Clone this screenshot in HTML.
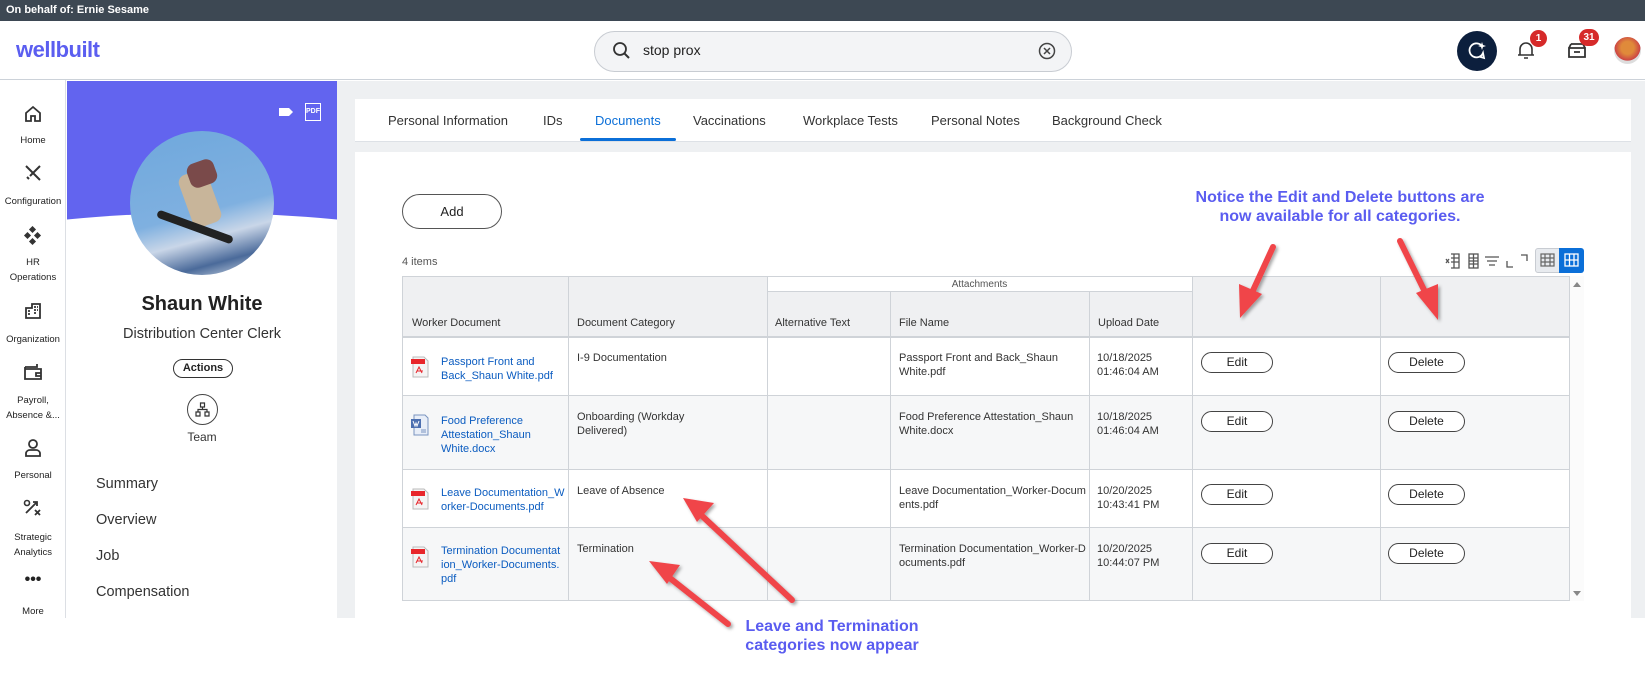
<!DOCTYPE html>
<html style="overflow:hidden;height:684px"><head><meta charset="utf-8">
<style>
*{box-sizing:border-box;margin:0;padding:0}
body{width:1645px;height:684px;overflow:hidden;background:#fff;font-family:"Liberation Sans",Arial,sans-serif;color:#333;position:relative}
.a{position:absolute}
.topbar{left:0;top:0;width:1645px;height:21px;background:#3d4853;color:#fff;font-size:11px;font-weight:bold;padding:4px 6px}
.hdr{left:0;top:21px;width:1645px;height:59px;background:#fff;border-bottom:1px solid #ccd2d9}
.nav{left:0;top:80px;width:66px;height:538px;background:#fff;border-right:1px solid #dcdfe4}
.nl{width:66px;text-align:center;font-size:9.5px;color:#222;line-height:15px;position:absolute;left:0}
.tab{font-size:13px;color:#333;top:113px}
.cell{position:absolute;font-size:11px;line-height:14px;color:#333}
.lnk{color:#0b5cc0}
.btn{position:absolute;border:1px solid #444;border-radius:12px;font-size:12px;text-align:center;line-height:19px;color:#222;background:#fff}
.ann{position:absolute;color:#5a5cf0;font-weight:bold;font-size:16px;text-align:center;line-height:19px}
</style></head><body>
<div class="a topbar">On behalf of: Ernie Sesame</div>
<div class="a hdr"></div>
<div class="a" style="left:16px;top:37px;font-size:22px;font-weight:bold;color:#5b5ef0;letter-spacing:-0.5px">wellbuilt</div>
<div class="a" style="left:594px;top:31px;width:478px;height:41px;border:1px solid #c8ccd2;border-radius:21px;background:#f3f4f6"></div>
<svg class="a" style="left:612px;top:41px" width="20" height="20" viewBox="0 0 20 20"><circle cx="8" cy="8" r="6" fill="none" stroke="#333" stroke-width="1.8"/><path d="M12.5 12.5L17 17" stroke="#333" stroke-width="2"/></svg>
<div class="a" style="left:643px;top:42px;font-size:14px;color:#222">stop prox</div>
<svg class="a" style="left:1038px;top:42px" width="18" height="18" viewBox="0 0 18 18"><circle cx="9" cy="9" r="7.5" fill="none" stroke="#444" stroke-width="1.5"/><path d="M6 6L12 12M12 6L6 12" stroke="#444" stroke-width="1.5"/></svg>
<div class="a" style="left:1457px;top:31px;width:40px;height:40px;border-radius:50%;background:#0c1f3d"></div>
<svg class="a" style="left:1466px;top:40px" width="22" height="22" viewBox="0 0 22 22"><path d="M15 5A7 7 0 1 0 17 13L18 18L13 16.5" fill="none" stroke="#fff" stroke-width="1.8"/><path d="M16 2L17 5L20 6L17 7L16 10L15 7L12 6L15 5Z" fill="#fff"/></svg>
<svg class="a" style="left:1517px;top:40px" width="18" height="20" viewBox="0 0 18 20"><path d="M3 15V9A6 6 0 0 1 15 9V15H3ZM1 15H17M7 18H11" fill="none" stroke="#333" stroke-width="1.6"/></svg>
<div class="a" style="left:1530px;top:30px;width:17px;height:17px;border-radius:50%;background:#d62a2a;color:#fff;font-size:10px;font-weight:bold;text-align:center;line-height:17px">1</div>
<svg class="a" style="left:1567px;top:41px" width="20" height="18" viewBox="0 0 20 18"><path d="M2 7H18V16H2ZM4 3H16L18 7M2 7L4 3M7 11H13" fill="none" stroke="#333" stroke-width="1.8"/></svg>
<div class="a" style="left:1579px;top:29px;width:20px;height:17px;border-radius:9px;background:#d62a2a;color:#fff;font-size:10px;font-weight:bold;text-align:center;line-height:17px">31</div>
<div class="a" style="left:1614px;top:37px;width:27px;height:27px;border-radius:50%;background:radial-gradient(circle at 50% 40%,#e08a3a 30%,#c44 60%,#ddd 62%)"></div>

<div class="a nav"></div>
<svg class="a" style="left:23px;top:104px" width="20" height="20" viewBox="0 0 20 20"><path d="M3 9L10 3L17 9V17H12V12H8V17H3Z" fill="none" stroke="#333" stroke-width="1.8"/></svg>
<div class="nl" style="top:133px">Home</div>
<svg class="a" style="left:24px;top:164px" width="18" height="18" viewBox="0 0 18 18"><path d="M2 2L16 16M16 2L6 12M3 13L5 15" stroke="#333" stroke-width="2"/></svg>
<div class="nl" style="top:194px">Configuration</div>
<svg class="a" style="left:23px;top:226px" width="20" height="20" viewBox="0 0 20 20"><g fill="#333"><rect x="7" y="1" width="5" height="5" transform="rotate(45 9.5 3.5)"/><rect x="2" y="7" width="5" height="5" transform="rotate(45 4.5 9.5)"/><rect x="12" y="7" width="5" height="5" transform="rotate(45 14.5 9.5)"/><rect x="7" y="13" width="5" height="5" transform="rotate(45 9.5 15.5)"/></g></svg>
<div class="nl" style="top:255px">HR<br>Operations</div>
<svg class="a" style="left:24px;top:302px" width="18" height="18" viewBox="0 0 18 18"><path d="M2 16V6H8V2H16V16ZM4 9H6M4 12H6M10 5H12M10 8H12M10 11H12M13 5H14M13 8H14" fill="none" stroke="#333" stroke-width="1.8"/></svg>
<div class="nl" style="top:332px">Organization</div>
<svg class="a" style="left:23px;top:363px" width="20" height="18" viewBox="0 0 20 18"><path d="M2 4H14V1M2 4V16H18V6H2M13 10H18V13H13Z" fill="none" stroke="#333" stroke-width="1.8"/></svg>
<div class="nl" style="top:393px">Payroll,<br>Absence &amp;...</div>
<svg class="a" style="left:24px;top:438px" width="18" height="20" viewBox="0 0 18 20"><circle cx="9" cy="6" r="4" fill="none" stroke="#333" stroke-width="1.8"/><path d="M2 18V15A4 4 0 0 1 6 12H12A4 4 0 0 1 16 15V18Z" fill="none" stroke="#333" stroke-width="1.8"/></svg>
<div class="nl" style="top:468px">Personal</div>
<svg class="a" style="left:23px;top:499px" width="20" height="18" viewBox="0 0 20 18"><circle cx="4" cy="4" r="2.5" fill="none" stroke="#333" stroke-width="1.6"/><path d="M3 14L14 3M10 3H14V7M12 11L17 16M17 11L12 16" fill="none" stroke="#333" stroke-width="1.8"/></svg>
<div class="nl" style="top:530px">Strategic<br>Analytics</div>
<div class="nl" style="top:572px;font-size:16px;font-weight:bold">•••</div>
<div class="nl" style="top:604px">More</div>

<div class="a" style="left:67px;top:81px;width:270px;height:537px;background:#fff;overflow:hidden">
 <div class="a" style="left:0;top:0;width:270px;height:160px;background:#6264ef"></div>
 <div class="a" style="left:-400px;top:132px;width:1070px;height:400px;border-radius:50%;background:#fff"></div>
</div>
<svg class="a" style="left:278px;top:106px" width="16" height="12" viewBox="0 0 16 12"><path d="M1 2H11L15 6L11 10H1Z" fill="#fff"/></svg>
<div class="a" style="left:305px;top:103px;width:16px;height:18px;border:1.5px solid #fff;color:#fff;font-size:7px;font-weight:bold;text-align:center;line-height:15px">PDF</div>
<div class="a" style="left:130px;top:131px;width:144px;height:144px;border-radius:50%;background:linear-gradient(165deg,#6fa8dc 0%,#7fb0e0 55%,#c9d6e8 70%,#4a6a9a 85%,#e6ecf4 100%);overflow:hidden">
 <div class="a" style="left:55px;top:40px;width:30px;height:55px;background:#c8b59a;transform:rotate(-20deg);border-radius:8px"></div>
 <div class="a" style="left:58px;top:30px;width:28px;height:25px;background:#7a4a4a;transform:rotate(-20deg);border-radius:8px"></div>
 <div class="a" style="left:25px;top:92px;width:80px;height:8px;background:#222;transform:rotate(20deg);border-radius:4px"></div>
</div>
<div class="a" style="left:67px;top:293px;width:270px;text-align:center;font-size:20px;font-weight:bold;color:#222">Shaun White</div>
<div class="a" style="left:67px;top:326px;width:270px;text-align:center;font-size:14.5px;color:#333">Distribution Center Clerk</div>
<div class="a" style="left:173px;top:359px;width:60px;height:19px;border:1px solid #333;border-radius:10px;font-size:11px;font-weight:bold;text-align:center;line-height:17px;color:#222">Actions</div>
<div class="a" style="left:187px;top:394px;width:31px;height:31px;border:1.2px solid #444;border-radius:50%"></div>
<svg class="a" style="left:195px;top:402px" width="15" height="15" viewBox="0 0 15 15"><path d="M5.5 1H9.5V5H5.5ZM1 10H5V14H1ZM10 10H14V14H10ZM7.5 5V7.5M3 10V7.5H12V10" fill="none" stroke="#333" stroke-width="1.2"/></svg>
<div class="a" style="left:67px;top:430px;width:270px;text-align:center;font-size:12px;color:#333">Team</div>
<div class="a" style="left:96px;top:476px;font-size:14.5px;color:#333">Summary</div>
<div class="a" style="left:96px;top:512px;font-size:14.5px;color:#333">Overview</div>
<div class="a" style="left:96px;top:548px;font-size:14.5px;color:#333">Job</div>
<div class="a" style="left:96px;top:584px;font-size:14.5px;color:#333">Compensation</div>

<div class="a" style="left:337px;top:81px;width:1308px;height:537px;background:#eef0f2"></div>
<div class="a" style="left:355px;top:99px;width:1276px;height:43px;background:#fff;border-bottom:1px solid #dde1e6"></div>
<div class="a tab" style="left:388px">Personal Information</div>
<div class="a tab" style="left:543px">IDs</div>
<div class="a tab" style="left:595px;color:#0b6fd8">Documents</div>
<div class="a" style="left:580px;top:138px;width:96px;height:3px;background:#0b6fd8;border-radius:2px"></div>
<div class="a tab" style="left:693px">Vaccinations</div>
<div class="a tab" style="left:803px">Workplace Tests</div>
<div class="a tab" style="left:931px">Personal Notes</div>
<div class="a tab" style="left:1052px">Background Check</div>
<div class="a" style="left:355px;top:152px;width:1276px;height:466px;background:#fff"></div>
<div class="a" style="left:402px;top:194px;width:100px;height:35px;border:1px solid #555;border-radius:18px;font-size:13px;text-align:center;line-height:33px;color:#222">Add</div>
<div class="a" style="left:402px;top:256px;font-size:11px;color:#555">4 items</div>

<svg class="a" style="left:1445px;top:251px" width="100" height="20" viewBox="0 0 100 20"><g fill="none" stroke="#555" stroke-width="1.3"><path d="M6 3H14V17H6M6 7H14M6 11H14M9 3V17"/><path d="M1 8L4 12M4 8L1 12"/><rect x="24" y="3" width="9" height="14"/><path d="M24 7H33M24 10H33M24 13H33M28.5 3V17"/><path d="M40 6H54M42 10H52M44 14H50"/><path d="M62 10V16H68M76 4H82V10"/></g></svg>
<div class="a" style="left:1535px;top:248px;width:25px;height:25px;background:#e8ebef;border:1px solid #c8ccd2;border-radius:3px 0 0 3px"></div>
<div class="a" style="left:1559px;top:248px;width:25px;height:25px;background:#0b6fd8;border-radius:0 3px 3px 0"></div>
<svg class="a" style="left:1540px;top:253px" width="40" height="15" viewBox="0 0 40 15"><g fill="none" stroke="#666" stroke-width="1.2"><rect x="1" y="1" width="13" height="12"/><path d="M1 5H14M1 9H14M5 1V13M10 1V13"/></g><g fill="none" stroke="#fff" stroke-width="1.3"><rect x="25" y="1" width="13" height="12"/><path d="M25 7H38M29.5 1V13M34 1V13"/></g></svg>

<div class="a" style="left:402px;top:277px;width:1167px;height:60px;background:#eff0f2"></div>
<div class="a" style="left:767px;top:277px;width:425px;height:15px;background:#fff"></div>
<div class="a" style="left:402px;top:395px;width:1167px;height:74px;background:#f6f7f8"></div>
<div class="a" style="left:402px;top:527px;width:1167px;height:74px;background:#f6f7f8"></div>
<div class="a" style="left:402px;top:276px;width:1168px;height:325px;border:1px solid #cfd3d8"></div>
<div class="a" style="left:767px;top:291px;width:425px;height:1px;background:#cfd3d8"></div>
<div class="a" style="left:402px;top:336px;width:1168px;height:2px;background:#cfd3d8"></div>
<div class="a" style="left:402px;top:395px;width:1168px;height:1px;background:#cfd3d8"></div>
<div class="a" style="left:402px;top:469px;width:1168px;height:1px;background:#cfd3d8"></div>
<div class="a" style="left:402px;top:527px;width:1168px;height:1px;background:#cfd3d8"></div>
<div class="a" style="left:568px;top:276px;width:1px;height:325px;background:#cfd3d8"></div>
<div class="a" style="left:767px;top:276px;width:1px;height:325px;background:#cfd3d8"></div>
<div class="a" style="left:890px;top:292px;width:1px;height:309px;background:#cfd3d8"></div>
<div class="a" style="left:1089px;top:292px;width:1px;height:309px;background:#cfd3d8"></div>
<div class="a" style="left:1192px;top:276px;width:1px;height:325px;background:#cfd3d8"></div>
<div class="a" style="left:1380px;top:276px;width:1px;height:325px;background:#cfd3d8"></div>
<div class="a" style="left:1570px;top:276px;width:14px;height:325px;background:#fbfbfb"></div>
<svg class="a" style="left:1572px;top:280px" width="10" height="318" viewBox="0 0 10 318"><path d="M1 7L5 2L9 7Z M1 311L5 316L9 311Z" fill="#888"/></svg>

<div class="cell" style="left:767px;top:278px;width:425px;text-align:center;font-size:10px;color:#555">Attachments</div>
<div class="cell" style="left:412px;top:316px">Worker Document</div>
<div class="cell" style="left:577px;top:316px">Document Category</div>
<div class="cell" style="left:775px;top:316px">Alternative Text</div>
<div class="cell" style="left:899px;top:316px">File Name</div>
<div class="cell" style="left:1098px;top:316px">Upload Date</div>

<svg width="0" height="0" style="position:absolute;left:0;top:0"><defs>
<symbol id="pdf" viewBox="0 0 20 22"><path d="M3 1H14L18 5V21H3Z" fill="#f4f4f4" stroke="#bbb"/><rect x="1" y="3" width="14" height="5" fill="#e8262b"/><path d="M6 17L9 11L12 17M7 15H13" stroke="#e8262b" fill="none" stroke-width="1"/></symbol>
<symbol id="doc" viewBox="0 0 20 22"><path d="M4 1H15L18 4V21H4Z" fill="#e8eef8" stroke="#7a94bf"/><rect x="1" y="5" width="10" height="9" fill="#4c6fb0"/><path d="M3 7L5 12L6 9L7 12L9 7" stroke="#fff" fill="none"/><path d="M11 16H16M11 18H16" stroke="#7a94bf"/></symbol>
</defs></svg>
<svg class="a" style="left:410px;top:356px" width="20" height="22"><use href="#pdf"/></svg>
<svg class="a" style="left:410px;top:414px" width="20" height="22"><use href="#doc"/></svg>
<svg class="a" style="left:410px;top:488px" width="20" height="22"><use href="#pdf"/></svg>
<svg class="a" style="left:410px;top:546px" width="20" height="22"><use href="#pdf"/></svg>

<div class="cell lnk" style="left:441px;top:355px">Passport Front and<br>Back_Shaun White.pdf</div>
<div class="cell lnk" style="left:441px;top:414px">Food Preference<br>Attestation_Shaun<br>White.docx</div>
<div class="cell lnk" style="left:441px;top:486px">Leave Documentation_W<br>orker-Documents.pdf</div>
<div class="cell lnk" style="left:441px;top:544px">Termination Documentat<br>ion_Worker-Documents.<br>pdf</div>

<div class="cell" style="left:577px;top:351px">I-9 Documentation</div>
<div class="cell" style="left:577px;top:410px">Onboarding (Workday<br>Delivered)</div>
<div class="cell" style="left:577px;top:484px">Leave of Absence</div>
<div class="cell" style="left:577px;top:542px">Termination</div>

<div class="cell" style="left:899px;top:351px">Passport Front and Back_Shaun<br>White.pdf</div>
<div class="cell" style="left:899px;top:410px">Food Preference Attestation_Shaun<br>White.docx</div>
<div class="cell" style="left:899px;top:484px">Leave Documentation_Worker-Docum<br>ents.pdf</div>
<div class="cell" style="left:899px;top:542px">Termination Documentation_Worker-D<br>ocuments.pdf</div>

<div class="cell" style="left:1097px;top:351px">10/18/2025<br>01:46:04 AM</div>
<div class="cell" style="left:1097px;top:410px">10/18/2025<br>01:46:04 AM</div>
<div class="cell" style="left:1097px;top:484px">10/20/2025<br>10:43:41 PM</div>
<div class="cell" style="left:1097px;top:542px">10/20/2025<br>10:44:07 PM</div>

<div class="btn" style="left:1201px;top:352px;width:72px;height:21px">Edit</div>
<div class="btn" style="left:1201px;top:411px;width:72px;height:21px">Edit</div>
<div class="btn" style="left:1201px;top:484px;width:72px;height:21px">Edit</div>
<div class="btn" style="left:1201px;top:543px;width:72px;height:21px">Edit</div>
<div class="btn" style="left:1388px;top:352px;width:77px;height:21px">Delete</div>
<div class="btn" style="left:1388px;top:411px;width:77px;height:21px">Delete</div>
<div class="btn" style="left:1388px;top:484px;width:77px;height:21px">Delete</div>
<div class="btn" style="left:1388px;top:543px;width:77px;height:21px">Delete</div>

<div class="ann" style="left:1150px;top:188px;width:380px">Notice the Edit and Delete buttons are<br>now available for all categories.</div>
<div class="ann" style="left:738px;top:617px;width:188px">Leave and Termination<br>categories now appear</div>

<svg class="a" style="left:0;top:0" width="1645" height="684" viewBox="0 0 1645 684">
<defs><filter id="sh" x="-20%" y="-20%" width="140%" height="140%"><feDropShadow dx="2" dy="2" stdDeviation="1.5" flood-color="#000" flood-opacity="0.35"/></filter></defs>
<g fill="#f0444a" stroke="#f0444a" stroke-width="6" stroke-linecap="round" filter="url(#sh)">
<line x1="1273" y1="247" x2="1250" y2="297"/><polygon stroke="none" points="1240,318 1239,284 1262,294"/>
<line x1="1400" y1="241" x2="1428" y2="298"/><polygon stroke="none" points="1438,320 1416,293 1438,284"/>
<line x1="792" y1="600" x2="700" y2="514"/><polygon stroke="none" points="683,498 714,503 697,522"/>
<line x1="728" y1="624" x2="666" y2="575"/><polygon stroke="none" points="649,561 680,565 667,584"/>
</g></svg>
</body></html>
